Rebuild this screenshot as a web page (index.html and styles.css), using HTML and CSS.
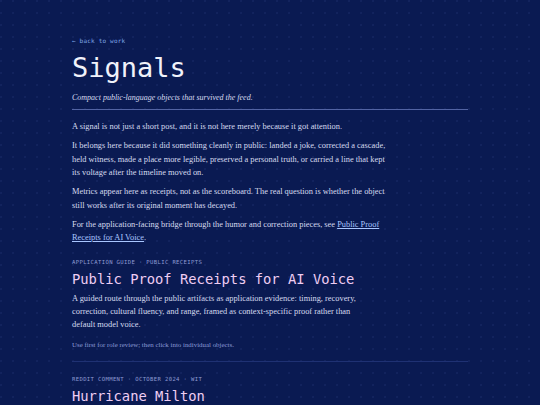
FILE: index.html
```html
<!DOCTYPE html>
<html lang="en">
<head>
<meta charset="utf-8">
<title>Signals</title>
<link rel="stylesheet" href="styles.css">
</head>
<body>
<main class="page">
  <header class="intro">
    <a class="back" href="#">← back to work</a>
    <h1 class="title">Signals</h1>
    <p class="subtitle">Compact public-language objects that survived the feed.</p>
  </header>
  <section class="lede">
    <p>A signal is not just a short post, and it is not here merely because it got attention.</p>
    <p>It belongs here because it did something cleanly in public: landed a joke, corrected a cascade, held witness, made a place more legible, preserved a personal truth, or carried a line that kept its voltage after the timeline moved on.</p>
    <p>Metrics appear here as receipts, not as the scoreboard. The real question is whether the object still works after its original moment has decayed.</p>
    <p>For the application-facing bridge through the humor and correction pieces, see <a class="link" href="#">Public Proof Receipts for AI Voice</a>.</p>
  </section>
  <article class="entry">
    <div class="meta">APPLICATION GUIDE · PUBLIC RECEIPTS</div>
    <h2 class="entry-title">Public Proof Receipts for AI Voice</h2>
    <p class="desc">A guided route through the public artifacts as application evidence: timing, recovery, correction, cultural fluency, and range, framed as context-specific proof rather than default model voice.</p>
    <p class="note">Use first for role review; then click into individual objects.</p>
  </article>
  <article class="entry entry-ruled">
    <div class="meta">REDDIT COMMENT · OCTOBER 2024 · WIT</div>
    <h2 class="entry-title">Hurricane Milton</h2>
  </article>
</main>
</body>
</html>
```
FILE: styles.css
```css
html, body {
  margin: 0;
  padding: 0;
}
body {
  background-color: #0a1a52;
  background-image:
    radial-gradient(circle at 1px 1px, rgba(120, 140, 220, 0.08) 1px, transparent 1.2px);
  background-size: 12px 12px;
  min-height: 405px;
  overflow: hidden;
  font-family: "Liberation Serif", "DejaVu Serif", serif;
  color: #d6dbef;
}
.page {
  width: 396px;
  margin: 0 auto 0 72px;
  padding-top: 36px;
}
.back {
  display: block;
  font-family: "DejaVu Sans Mono", "Liberation Mono", monospace;
  font-size: 6px;
  letter-spacing: 0.2px;
  color: #7fa6e6;
  text-decoration: none;
  line-height: 10px;
}
.title {
  margin: 6px 0 0;
  font-family: "DejaVu Sans Mono", "Liberation Mono", monospace;
  font-weight: 400;
  font-size: 27px;
  line-height: 32px;
  color: #f1f2fa;
  letter-spacing: 0;
}
.subtitle {
  margin: 8px 0 0;
  font-style: italic;
  font-size: 8px;
  line-height: 12px;
  color: #d6dbef;
  padding-bottom: 5px;
  border-bottom: 1px solid #5263a3;
}
.lede {
  padding-top: 10px;
  width: 318px;
}
.lede p {
  margin: 0 0 5.5px;
  font-size: 8.4px;
  line-height: 13.5px;
}
.link {
  color: #a9c6ff;
  text-decoration: underline;
}
.entry {
  padding-top: 7px;
}
.entry-ruled {
  margin-top: 11px;
  padding-top: 12px;
  border-top: 1px solid #1f3173;
}
.meta {
  font-family: "DejaVu Sans Mono", "Liberation Mono", monospace;
  font-size: 5.6px;
  letter-spacing: 0.35px;
  color: #8e9bd2;
  line-height: 10px;
}
.entry-title {
  margin: 3px 0 0;
  font-family: "DejaVu Sans Mono", "Liberation Mono", monospace;
  font-weight: 400;
  font-size: 13.8px;
  line-height: 18px;
  color: #efcdf3;
}
.desc {
  margin: 4px 0 0;
  width: 300px;
  font-size: 8.4px;
  line-height: 13.2px;
}
.note {
  margin: 8px 0 0;
  font-size: 6.9px;
  line-height: 10px;
  color: #8a9ad6;
}
```
